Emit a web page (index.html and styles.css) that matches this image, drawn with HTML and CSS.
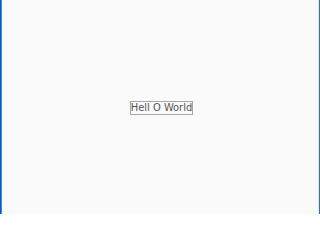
FILE: index.html
```html
<!DOCTYPE html>
<html>
<head>
<meta charset="utf-8">
<link rel="stylesheet" href="styles.css">
</head>
<body>
<div class="frame">
  <span class="label">Hell O World</span>
</div>
</body>
</html>
```

FILE: styles.css
```css
html, body {
  margin: 0;
  padding: 0;
  width: 320px;
  height: 214px;
  overflow: hidden;
}
.frame {
  box-sizing: border-box;
  width: 320px;
  height: 214px;
  padding: 2px 0 0 3px;
  background: #fafafa;
  border-left: 1px solid #2456a8;
  border-right: 1px solid #3b6cc0;
  box-shadow: inset 1px 0 0 #3c86e6, inset -1px 0 0 #e4e6ea;
  display: flex;
  align-items: center;
  justify-content: center;
}
.label {
  font-family: "DejaVu Sans Condensed", "DejaVu Sans", sans-serif;
  font-size: 11px;
  line-height: 12px;
  color: #555;
  border: 1px solid #a6a6a6;
  white-space: nowrap;
}
```
